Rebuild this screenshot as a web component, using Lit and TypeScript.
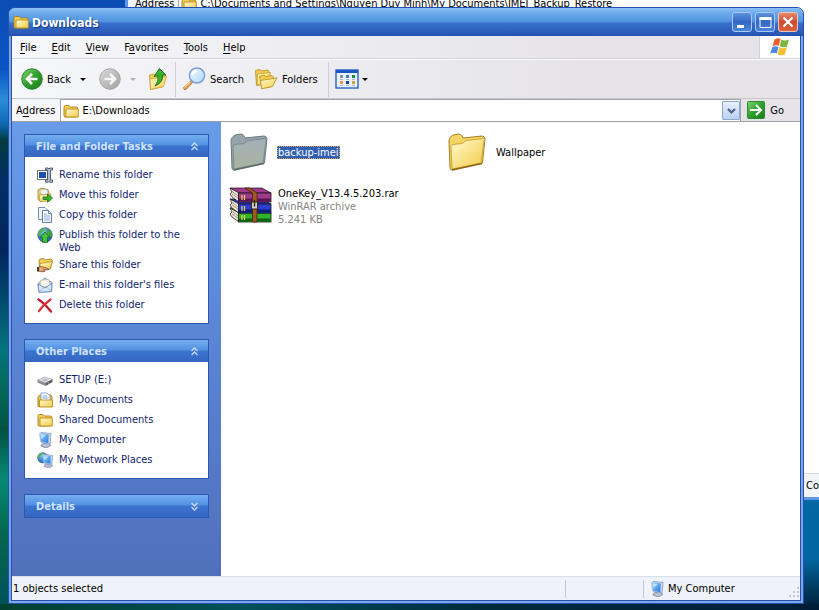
import { LitElement, html, css, svg, nothing, TemplateResult } from "lit";
import { customElement, property, state } from "lit/decorators.js";

/* ---------- icons ---------- */

const gradients = svg`
  <defs>
    <linearGradient id="fold" x1="0" y1="0" x2="1" y2="1">
      <stop offset="0" stop-color="#fffbd2" /><stop offset="1" stop-color="#f2cb45" />
    </linearGradient>
    <linearGradient id="grn" x1="0" y1="0" x2="1" y2="1">
      <stop offset="0" stop-color="#7fd873" /><stop offset="0.5" stop-color="#2f9f2b" /><stop offset="1" stop-color="#1d7d1b" />
    </linearGradient>
    <linearGradient id="gry" x1="0" y1="0" x2="1" y2="1">
      <stop offset="0" stop-color="#dcdcdc" /><stop offset="1" stop-color="#9f9f9f" />
    </linearGradient>
    <linearGradient id="scr" x1="0" y1="0" x2="1" y2="1">
      <stop offset="0" stop-color="#9fdcff" /><stop offset="1" stop-color="#1f74d8" />
    </linearGradient>
    <linearGradient id="gryfold" x1="0" y1="0" x2="0" y2="1">
      <stop offset="0" stop-color="#a3b0ba" /><stop offset="1" stop-color="#a9b39c" />
    </linearGradient>
    <radialGradient id="globe" cx="0.4" cy="0.3" r="0.8">
      <stop offset="0" stop-color="#7fc4f5" /><stop offset="1" stop-color="#164f9e" />
    </radialGradient>
    <linearGradient id="lens" x1="0" y1="0" x2="1" y2="1">
      <stop offset="0" stop-color="#f4fcff" /><stop offset="1" stop-color="#a5d8f7" />
    </linearGradient>
  </defs>
`;

const icon = (w: number, h: number, body: unknown) =>
  html`<svg class="icon" width=${w} height=${h} viewBox="0 0 ${w} ${h}" aria-hidden="true">${gradients}${body}</svg>`;

const computerBody = svg`
  <path d="M5 12 L11 11 L14 13.500 L9 16 L4 14Z" fill="#b9c0d2" stroke="#6d7894" stroke-width="0.7" />
  <path d="M4 0.500 L14 1.500 L13 12 L4.500 10.500Z" fill="#d5deee" stroke="#7387ad" stroke-width="0.7" />
  <path d="M2.500 1 L12 2.200 L11.500 11.500 L3.500 9.800Z" fill="url(#scr)" stroke="#a9c6ea" stroke-width="0.6" />
  <path d="M4 2.500 L9 3 L4.500 7Z" fill="#d9f2ff" opacity="0.7" />
`;

const globeBody = svg`
  <circle cx="8" cy="8" r="7.300" fill="url(#globe)" stroke="#27558c" stroke-width="0.6" />
  <path d="M2 4.500 Q5 0.500 8 1 L7 4 L4 6 L3 9 L1 8Z" fill="#54b948" />
  <path d="M10 2 Q14.500 4 15 8 L13 11 L11 8 L9.500 5Z" fill="#3fa836" />
`;

const smallFolder = svg`
  <path d="M1 4 Q1 2.500 2.500 2.500 L6 2.500 L7.500 4 L13.500 4 Q14.500 4 14.500 5 L14.500 13 L13 14 L2 14 Q1 14 1 13Z" fill="#f2cf56" stroke="#a97f14" stroke-width="0.9" />
  <path d="M3 6 L15.300 6 L15.300 14 L3 14Z" fill="url(#fold)" stroke="#b98d1c" stroke-width="0.9" />
`;

const book = (cover: string, shade: string, y: number) => svg`
  <g transform="translate(0 ${y})">
    <path d="M4 0 L36 0 L45 5 L12 5Z" fill=${cover} stroke="#1c1420" stroke-width="0.7" />
    <path d="M4 0 L13 5 V14 L6 9 L4 6 L6 4Z" fill="#f4ecd9" stroke="#221a20" stroke-width="0.8" />
    <path d="M6 3.500 L12.500 8 M6 6 L12.500 10.500" stroke="#8d8374" stroke-width="0.9" />
    <rect x="12.500" y="5" width="32.500" height="9" fill=${cover} stroke="#1a1218" stroke-width="0.8" />
    <rect x="13" y="10.500" width="31.500" height="3" fill=${shade} />
    <path d="M16 7 V12 M18.500 7 V12" stroke="#f1d05b" stroke-width="1.200" />
  </g>`;

const icons: Record<string, () => TemplateResult> = {
  folder: () => icon(16, 16, smallFolder),
  rename: () => icon(16, 16, svg`
    <rect x="0.500" y="3.500" width="10" height="9" fill="#fff" stroke="#6b7485" />
    <rect x="2" y="5" width="7" height="6" fill="#1c4fae" />
    <path d="M8.500 1 H11 L12 2 L13 1 H15.500 V3 H13.500 V13 H15.500 V15.300 H13 L12 14.500 L11 15.300 H8.500 V13 H10.500 V3 H8.500Z" fill="#b4bdcc" stroke="#465166" stroke-width="0.9" />
  `),
  move: () => icon(16, 16, svg`
    <path d="M1 3 L4 1 L11 2.500 L12 6 L12 13 L3 14.500 L1 12Z" fill="#f0d36a" stroke="#a2843a" stroke-width="0.8" />
    <path d="M3 3 L10 2.500 L11 7 L4 8Z" fill="#f4f7fb" stroke="#9fa9b8" stroke-width="0.6" />
    <path d="M2 8 L14 7 L13 14 L3 14.500Z" fill="url(#fold)" stroke="#b08b2b" stroke-width="0.7" />
    <path d="M6 10 H10.500 V7 L15.500 11 L10.500 15.300 V12.500 H6Z" fill="#37b52e" stroke="#17701a" stroke-width="0.8" />
  `),
  copy: () => icon(16, 16, svg`
    <path d="M1.500 0.500 H8 L11 3.500 V12.500 H1.500Z" fill="#eef5ff" stroke="#6d83a8" stroke-width="0.9" />
    <path d="M5.500 3.500 H11.500 L14.500 6.500 V15.500 H5.500Z" fill="#f8fbff" stroke="#54709c" stroke-width="0.9" />
    <path d="M11.500 3.500 V6.500 H14.500" fill="#c5d8f2" stroke="#54709c" stroke-width="0.8" />
    <path d="M7 7 H10 M7 9 H13 M7 11 H13 M7 13 H13" stroke="#7fa3d6" stroke-width="0.9" />
  `),
  publish: () => icon(16, 16, svg`${globeBody}
    <path d="M8 5 L13 10.500 H10.500 V15.300 H5.500 V10.500 H3Z" fill="#45c13a" stroke="#14661a" stroke-width="0.8" />
  `),
  share: () => icon(16, 16, svg`
    <path d="M2 4 L3 2 L7 1.500 L8.500 3 L14 2 L15.300 3.500 L13.500 11.500 L3 13Z" fill="#f3cf55" stroke="#9c7718" stroke-width="0.8" />
    <path d="M3 6.500 L15.500 4.500 L13 12 L3 13Z" fill="url(#fold)" stroke="#ab841f" stroke-width="0.7" />
    <path d="M0.500 10.500 L4 9.500 L9 10.800 L12 12.300 L10 13 L6.500 12.800 L8 14.500 L4 14.800 L0.500 13.500Z" fill="#e2a878" stroke="#6c3f1d" stroke-width="0.7" />
    <path d="M0 10 H2 V14.500 H0Z" fill="#4a3a2c" />
  `),
  mail: () => icon(16, 16, svg`
    <path d="M1 6.500 L8 0.800 L15 5.500 L14.500 14.500 L2 15.300Z" fill="#bcd3f0" stroke="#6d8bb8" stroke-width="0.8" />
    <path d="M3.500 3.500 L12 2.500 L13 9 L4 10Z" fill="#fffdf0" stroke="#c9b37c" stroke-width="0.6" />
    <path d="M1 7 L8 11 L15 6 L14.500 14.500 L2 15.300Z" fill="#d9e8fa" stroke="#5f80b2" stroke-width="0.8" />
    <path d="M2 15 L7 10.500 M14.500 14.500 L9.500 10" stroke="#8ba8d0" stroke-width="0.7" />
  `),
  del: () => icon(16, 16, svg`
    <path d="M1.500 2.500 Q6 5 14 14.500" fill="none" stroke="#c4202c" stroke-width="2.400" stroke-linecap="round" />
    <path d="M13.500 2.500 Q7 7 2 14" fill="none" stroke="#d8343c" stroke-width="2.200" stroke-linecap="round" />
  `),
  drive: () => icon(16, 16, svg`
    <path d="M0.500 8 L8 5 L15.500 7.500 L8.500 11Z" fill="#e4e6e8" stroke="#8b8f94" stroke-width="0.6" />
    <path d="M0.500 8 L8.500 11 V14 L0.500 10.500Z" fill="#8b8f94" />
    <path d="M8.500 11 L15.500 7.500 V10 L8.500 14Z" fill="#55595e" />
    <ellipse cx="8" cy="8" rx="3" ry="1.200" fill="#b8bcc0" />
    <circle cx="11.500" cy="11" r="0.800" fill="#9aa59a" />
  `),
  docs: () => icon(16, 16, svg`
    <path d="M1 4.500 L3 3 L14 3 L15 5 V14.500 H1Z" fill="#edc64b" stroke="#a97f14" stroke-width="0.9" />
    <path d="M4 1 H10 L13 4 V11 H4Z" fill="#fff" stroke="#6f93c9" stroke-width="0.8" />
    <path d="M5.500 4 H10 M5.500 6 H11.500" stroke="#5b9ae0" stroke-width="0.9" />
    <path d="M2.500 8 H15.500 V15 H2.500Z" fill="url(#fold)" stroke="#b98d1c" stroke-width="0.9" />
  `),
  computer: () => icon(16, 16, computerBody),
  network: () => icon(16, 16, svg`
    <g transform="scale(0.72)">${globeBody}</g>
    <g transform="translate(3.500 2) scale(0.88)">${computerBody}</g>
  `),
  back: () => icon(22, 22, svg`
    <circle cx="11" cy="11" r="10.300" fill="url(#grn)" stroke="#1f7a1f" stroke-width="0.9" />
    <path d="M16.500 11 H6.500 M11 6 L6 11 L11 16" fill="none" stroke="#fff" stroke-width="2.600" />
  `),
  forward: () => icon(22, 22, svg`
    <circle cx="11" cy="11" r="10.300" fill="url(#gry)" stroke="#a4a4a4" stroke-width="0.9" />
    <path d="M5.500 11 H15.500 M11 6 L16 11 L11 16" fill="none" stroke="#f6f6f6" stroke-width="2.600" />
  `),
  up: () => icon(22, 24, svg`
    <path d="M2.500 8 L7 7 L8.500 8.500 L17 6.500 L19 9 L15 20 L3.500 22.500Z" fill="#f1cd54" stroke="#c69b2a" stroke-width="0.8" />
    <path d="M3 12 L19.500 9.500 L16.500 19.500 L3.500 22.500Z" fill="url(#fold)" stroke="#cda133" stroke-width="0.8" />
    <path d="M12.500 1.500 L19 8 L15.500 8 Q16.500 15.500 8 19 Q12 14.500 11 8.800 L7 9.500Z" fill="#35b32c" stroke="#176b18" stroke-width="0.9" />
  `),
  search: () => icon(24, 24, svg`
    <path d="M9.500 13.500 L11 15 L4 22.500 Q1.500 23.500 1.500 20.500Z" fill="#e7a04f" stroke="#a5682a" stroke-width="0.8" />
    <path d="M8 15 L2.500 20.500" stroke="#fbd59b" stroke-width="1.200" />
    <circle cx="15" cy="8.500" r="7.600" fill="url(#lens)" stroke="#7f9fdb" stroke-width="1.500" />
    <path d="M10.500 8 Q11 4.500 15 4" fill="none" stroke="#fff" stroke-width="2" />
  `),
  folders: () => icon(24, 22, svg`
    <path d="M1.500 2.500 L6 1.500 L7.500 3 L14 2 L15 4 L15 15 L2.500 17.500Z" fill="#f2cd54" stroke="#c1932a" stroke-width="0.9" />
    <path d="M3.500 6 L16.500 4.500 L14 15.500 L3 17Z" fill="url(#fold)" stroke="#c69b2a" stroke-width="0.8" />
    <path d="M5.500 8.500 L10 7 L11.500 8.500 L18 7.500 L19.500 9.500 L17.500 18.500 L8 20.500Z" fill="#f2cd54" stroke="#b98d1c" stroke-width="0.8" />
    <path d="M6.500 12.500 L23 9.800 L18.500 18.500 L7.500 20.800Z" fill="url(#fold)" stroke="#c1932a" stroke-width="0.9" />
  `),
  views: () => icon(24, 20, svg`
    <rect x="1" y="1" width="22" height="18" fill="#e9f3ff" stroke="#1c57b8" stroke-width="1.300" />
    <rect x="1" y="1" width="22" height="3" fill="#1c57c4" />
    <rect x="5" y="6" width="3" height="3" fill="#8b8f9a" /><rect x="11" y="6" width="3" height="3" fill="#3b7fc9" /><rect x="17" y="6" width="3" height="3" fill="#1c8a36" />
    <path d="M5 10.500 h3 M11 10.500 h3 M17 10.500 h3" stroke="#a9b3c6" />
    <rect x="5" y="12" width="3" height="3" fill="#e79a3c" /><rect x="11" y="12" width="3" height="3" fill="#1b3f99" /><rect x="17" y="12" width="3" height="3" fill="#c9a52c" />
    <path d="M5 16.500 h3 M11 16.500 h3 M17 16.500 h3" stroke="#a9b3c6" />
  `),
  go: () => icon(18, 18, svg`
    <rect x="0.500" y="0.500" width="17" height="17" rx="1" fill="url(#grn)" stroke="#2c8a2c" />
    <path d="M3 9 H13.500 M9 4 L14 9 L9 14" fill="none" stroke="#fff" stroke-width="2" />
  `),
  flag: () => icon(22, 20, svg`
    <path d="M5.500 2.500 Q9 0.300 11.500 2 L9.800 8.800 Q7 7.300 3.500 9.200Z" fill="#e9602c" />
    <path d="M12.300 2.500 Q15.500 4.500 20 2.500 L18 9.500 Q14.500 11 10.800 9.200Z" fill="#7db83a" />
    <path d="M3.200 10.200 Q6.500 8.300 9.500 10 L7.800 16.500 Q5 15 1.200 16.700Z" fill="#4a8ae0" />
    <path d="M10.400 10.300 Q14 12.200 17.800 10.500 L15.800 17.500 Q12 19.300 8.600 17.200Z" fill="#f5be2e" />
  `),
  bigFolder: () => icon(48, 48, svg`
    <path d="M5 13 Q5 10 7 8.500 L9 7 L15 6 Q17 6 18 8 L19 10 L38 8 Q40.500 8 41 10.500 L38.500 35 L8 42 Q6 42 6 40Z" fill="#f3d465" stroke="#a9801f" />
    <path d="M7 18.500 Q7 17 9 16.500 L18 15.500 L22 12.500 L39.500 10.500 Q40.500 11 40 13 L37 35 L8 41Z" fill="url(#fold)" stroke="#d0a53a" />
    <path d="M8 42 L38 35.500" stroke="#8a661a" stroke-width="1.500" />
  `),
  greyFolder: () => icon(48, 48, svg`
    <path d="M5 13 Q5 10 7 8.500 L9 7 L15 6 Q17 6 18 8 L19 10 L38 8 Q40.500 8 41 10.500 L38.500 35 L8 42 Q6 42 6 40Z" fill="#95a3ad" stroke="#6b7a80" />
    <path d="M7 18.500 Q7 17 9 16.500 L18 15.500 L22 12.500 L39.500 10.500 Q40.500 11 40 13 L37 35 L8 41Z" fill="url(#gryfold)" stroke="#7d8b8e" />
    <path d="M8 42 L38 35.500" stroke="#5f6b66" stroke-width="1.500" />
  `),
  rar: () => icon(48, 48, svg`
    ${book("#2db52a", "#0c6412", 26)}
    ${book("#2a3fd0", "#101a78", 17)}
    ${book("#a03a8c", "#5a1550", 6)}
    <path d="M19 6 L23.500 6 L31 11 V40 H26.500 V11Z" fill="#9a5a22" stroke="#4a270b" stroke-width="0.8" />
    <rect x="25.500" y="20" width="6" height="7" fill="#d9d3c4" stroke="#2d2620" />
    <path d="M28.500 18 V24.500" stroke="#3a2c14" stroke-width="1.500" />
  `),
  chevUp: () => icon(9, 9, svg`<path d="M1.500 4 L4.500 1 L7.500 4 M1.500 8 L4.500 5 L7.500 8" fill="none" stroke="#c9dcff" stroke-width="1.300" />`),
  chevDown: () => icon(9, 9, svg`<path d="M1.500 1 L4.500 4 L7.500 1 M1.500 5 L4.500 8 L7.500 5" fill="none" stroke="#c9dcff" stroke-width="1.300" />`),
  dropArrow: () => icon(9, 8, svg`<path d="M1 2 L4.500 5.500 L8 2" fill="none" stroke="#4d6185" stroke-width="2.200" />`),
  minimize: () => icon(18, 18, svg`<rect x="4" y="12" width="7" height="3" fill="#fff" />`),
  maximize: () => icon(18, 18, svg`<path d="M4 5 H15 V14.500 H4Z" fill="none" stroke="#fff" /><rect x="3.500" y="4" width="12" height="3" fill="#fff" />`),
  close: () => icon(18, 18, svg`<path d="M4.500 4.500 L13.500 13.500 M13.500 4.500 L4.500 13.500" stroke="#fff" stroke-width="2.200" />`),
  grip: () => icon(12, 12, svg`<g fill="#c3c5d3">
    <rect x="9" y="1" width="2" height="2" /><rect x="5" y="5" width="2" height="2" /><rect x="9" y="5" width="2" height="2" />
    <rect x="1" y="9" width="2" height="2" /><rect x="5" y="9" width="2" height="2" /><rect x="9" y="9" width="2" height="2" /></g>`),
};

const resets = css`
  * { box-sizing: border-box; }
  button, input {
    font: inherit; color: inherit; background: none; border: 0; margin: 0; padding: 0; border-radius: 0;
  }
  a { color: inherit; text-decoration: none; }
  .icon { display: block; flex: none; }
`;

/* ---------- task pane group ---------- */

interface Link { icon: string; label: string; }

@customElement("task-group")
export class TaskGroup extends LitElement {
  @property() heading = "";
  @property({ type: Boolean }) open = false;
  @property({ attribute: false }) links: Link[] = [];

  static styles = [resets, css`
    :host { display: block; border: 1px solid #2a56b4; }
    h2 { margin: 0; font: inherit; }
    .head {
      display: flex; align-items: center; justify-content: space-between;
      width: 100%; height: 22px; padding: 0 9px 0 11px;
      font-weight: bold; color: #cfe3ff; text-align: left;
      background: linear-gradient(#74aef0 0, #5391e2 45%, #3c74cf 50%, #3566c2 100%);
    }
    .list {
      display: flex; flex-direction: column; gap: 3px;
      margin: 0; padding: 10px 20px 9px 12px; list-style: none; background: #fff;
    }
    .link { display: flex; gap: 6px; min-height: 17px; color: #10246e; line-height: 13px; }
    .text { padding-top: 1px; }
  `];

  private toggle() { this.open = !this.open; }

  render() {
    return html`
      <h2>
        <button class="head" aria-expanded=${this.open} @click=${this.toggle}>
          ${this.heading}${this.open ? icons.chevUp() : icons.chevDown()}
        </button>
      </h2>
      ${this.open ? html`
        <ul class="list">
          ${this.links.map((l) => html`
            <li><a class="link" href="#">${icons[l.icon]()}<span class="text">${l.label}</span></a></li>`)}
        </ul>` : nothing}
    `;
  }
}

/* ---------- page ---------- */

@customElement("app-root")
export class AppRoot extends LitElement {
  @state() private selected = "backup-imei";

  private menus = ["File", "Edit", "View", "Favorites", "Tools", "Help"];

  private keys: Record<string, number> = { Favorites: 1 };

  private tasks: Link[] = [
    { icon: "rename", label: "Rename this folder" },
    { icon: "move", label: "Move this folder" },
    { icon: "copy", label: "Copy this folder" },
    { icon: "publish", label: "Publish this folder to the Web" },
    { icon: "share", label: "Share this folder" },
    { icon: "mail", label: "E-mail this folder's files" },
    { icon: "del", label: "Delete this folder" },
  ];

  private places: Link[] = [
    { icon: "drive", label: "SETUP (E:)" },
    { icon: "docs", label: "My Documents" },
    { icon: "folder", label: "Shared Documents" },
    { icon: "computer", label: "My Computer" },
    { icon: "network", label: "My Network Places" },
  ];

  private files = [
    { name: "backup-imei", icon: "bigFolder", details: [] as string[] },
    { name: "Wallpaper", icon: "bigFolder", details: [] as string[] },
    { name: "OneKey_V13.4.5.203.rar", icon: "rar", details: ["WinRAR archive", "5.241 KB"] },
  ];

  static styles = [resets, css`
    :host {
      display: flex; position: relative; overflow: hidden; box-sizing: border-box;
      min-height: 100vh; padding: 7px 15px 6px 8px;
      font: 11px/13px "DejaVu Sans Condensed", "DejaVu Sans", sans-serif; color: #000;
      background:
        linear-gradient(90deg, #03402f 0, #02505a 30%, #012a3c 60%, #001d38 100%) bottom / 100% 6px no-repeat,
        linear-gradient(#0068a2 0 500px, #02659f 560px, #00395c 590px, #001d38) right / 20px 100% no-repeat,
        linear-gradient(#0b4db4 0, #0a55c4 70px, #2b8edb 100px, #0b66b0 125px, #033b3e 140px, #022f66 180px,
          #01265c 250px, #014a6e 300px, #04757c 350px, #046b5e 380px, #03523f 430px, #068a76 480px, #03694f 530px, #02505a 100%);
    }

    .behind {
      position: absolute; top: -10px; left: 125px; right: -110px; height: 510px;
      display: flex; flex-direction: column; justify-content: space-between;
      border: 3px solid #5f96e8; border-top: 0; background: #fff;
    }
    .behind-address {
      display: flex; align-items: center; height: 26px; padding: 6px 0 4px 7px; gap: 4px;
      background: #f3f4f8; border-bottom: 1px solid #8c8c8c;
    }
    .behind-field {
      display: flex; align-items: center; gap: 3px; flex: 1; height: 24px;
      padding-left: 2px; border-left: 1px solid #a5acb2; background: #fff;
    }
    .behind-status {
      display: flex; justify-content: flex-end; align-items: center;
      height: 24px; background: #f1f4f9; border-top: 1px solid #d6dae0;
    }
    .behind-cell { width: 120px; }

    .window {
      position: relative; display: flex; flex-direction: column; flex: 1; min-width: 0;
      border: 1px solid #2150ae; border-radius: 7px 7px 0 0; overflow: hidden;
      background: #7ca6ec; padding: 0 2px 2px;
    }
    .titlebar {
      display: flex; align-items: center; gap: 3px; height: 28px; margin: 0 -2px; padding: 0 5px 0 4px;
      background: linear-gradient(#8cc0f4 0, #68a8ea 20%, #5294e0 48%, #3870cc 54%, #2b5ab8 90%, #2450ac 100%);
    }
    .title {
      flex: 1; margin: 0; padding: 3px 0 0 0; font-size: 12px; font-weight: bold; color: #fff;
      text-shadow: 1px 1px 1px #123a86;
    }
    .caption {
      width: 20px; height: 20px; border: 1px solid #a9c8f4; border-radius: 3px;
      background: linear-gradient(#5b93e0, #3467c4 50%, #4a86dd);
    }
    .caption.x { border-color: #f0c3b8; background: linear-gradient(#e58a70, #cf4a2c 50%, #dd6241); }

    .frame {
      display: flex; flex-direction: column; flex: 1;
      border: 1px solid #2450ac; border-top: 0;
      background: #fff;
    }
    .bars { background: linear-gradient(90deg, #f6f7fa, #e5e3e8 75%); }

    .menubar { display: flex; height: 23px; border-bottom: 1px solid #d3d2d6; }
    .menus { display: flex; flex: 1; align-items: center; gap: 15px; padding-left: 8px; }
    .key { text-decoration: underline; text-underline-offset: 2px; }
    .flag {
      display: flex; align-items: center; justify-content: center;
      width: 41px; background: #fff; border-left: 1px solid #d3d2d6;
    }

    .toolbar {
      display: flex; align-items: center; height: 40px; padding-left: 9px;
      border-top: 1px solid #fbfbfc; border-bottom: 1px solid #c8c7cb;
    }
    .tool { display: flex; align-items: center; gap: 4px; }
    .grey { color: #b0b0b0; }
    .arrow { width: 24px; height: 20px; display: flex; align-items: center; justify-content: center; }
    .arrow.slim { width: 12px; }
    .tri { border: 3px solid transparent; border-top-color: currentColor; border-bottom: 0; }
    .sep { width: 1px; height: 35px; margin: 0 6px; background: #cfced2; }
    .sep.far { margin-left: 10px; }
    .tool.forward { margin-left: 4px; }
    .tool.up { margin-left: 2px; }
    .tool.next { margin-left: 10px; }

    .addressbar { display: flex; align-items: center; height: 23px; border-bottom: 1px solid #a0a0a4; }
    .address-label { padding: 0 5px 0 4px; }
    .combo {
      display: flex; align-items: center; flex: 1; height: 22px; padding: 0 0 0 2px; gap: 3px;
      border: 1px solid #a2a3a8; border-bottom: 0; background: #fff;
    }
    .combo-input { flex: 1; min-width: 0; outline: 0; }
    .drop {
      display: flex; align-items: center; justify-content: center; width: 18px; height: 19px;
      border: 1px solid #8fa6cd; border-radius: 1px; background: linear-gradient(#e8f1fd, #b9d0f3);
    }
    .go { display: flex; align-items: center; gap: 5px; padding: 0 16px 0 6px; }

    .body { display: flex; flex: 1; }
    .pane {
      display: flex; flex-direction: column; gap: 15px; width: 209px; flex: none;
      padding: 12px 12px 20px; background: linear-gradient(#689ce8, #5b86d6 45%, #5170bc);
    }
    .files {
      display: grid; grid-template-columns: repeat(auto-fill, 212px); grid-auto-rows: 48px;
      gap: 6px; align-content: start; flex: 1; min-width: 0; margin: 0; padding: 6px 5px; list-style: none;
    }
    .file { display: flex; align-items: center; gap: 3px; text-align: left; height: 48px; }
    .name { padding: 0 1px; }
    .name.on { background: #2f5fb3; color: #fff; outline: 1px dotted #d8a04a; outline-offset: -1px; }
    .meta { display: block; padding: 0 1px; color: #858585; }
    .lines { display: block; }

    .status {
      display: flex; align-items: center; height: 24px; background: #eff2f8; border-top: 1px solid #d7dee4;
    }
    .count { flex: 1; padding-left: 1px; }
    .cell { width: 78px; height: 18px; border-left: 1px solid #c3c8d4; }
    .zone {
      display: flex; align-items: center; gap: 3px; width: 157px; height: 18px; padding-left: 5px;
      border-left: 1px solid #c3c8d4;
    }
    .grip { margin-left: auto; align-self: flex-end; }
  `];

  private menu(label: string) {
    const k = this.keys[label] ?? 0;
    return html`<button role="menuitem">${label.slice(0, k)}<span class="key">${label[k]}</span>${label.slice(k + 1)}</button>`;
  }

  render() {
    return html`
      <div class="behind">
        <div class="behind-address">
          <span>Address</span>
          <span class="behind-field">${icons.folder()}<span>C:\\Documents and Settings\\Nguyen Duy Minh\\My Documents\\IMEI_Backup_Restore</span></span>
        </div>
        <div class="behind-status"><span class="behind-cell">Co</span></div>
      </div>

      <main class="window">
        <header class="titlebar">
          ${icons.folder()}
          <h1 class="title">Downloads</h1>
          <button class="caption" aria-label="Minimize">${icons.minimize()}</button>
          <button class="caption" aria-label="Maximize">${icons.maximize()}</button>
          <button class="caption x" aria-label="Close">${icons.close()}</button>
        </header>

        <div class="frame">
          <div class="bars">
            <div class="menubar">
              <nav class="menus" role="menubar">${this.menus.map((m) => this.menu(m))}</nav>
              <div class="flag">${icons.flag()}</div>
            </div>

            <div class="toolbar">
              <button class="tool">${icons.back()}Back</button>
              <button class="arrow" aria-label="Back history"><span class="tri"></span></button>
              <button class="tool forward" aria-label="Forward">${icons.forward()}</button>
              <button class="arrow grey" aria-label="Forward history"><span class="tri"></span></button>
              <button class="tool up" aria-label="Up">${icons.up()}</button>
              <span class="sep"></span>
              <button class="tool">${icons.search()}Search</button>
              <button class="tool next">${icons.folders()}Folders</button>
              <span class="sep far"></span>
              <button class="tool" aria-label="Views">${icons.views()}</button>
              <button class="arrow slim" aria-label="Views menu"><span class="tri"></span></button>
            </div>

            <div class="addressbar">
              <label class="address-label" for="address">A<span class="key">d</span>dress</label>
              <div class="combo">
                ${icons.folder()}
                <input id="address" class="combo-input" value="E:\\Downloads" />
                <button class="drop" aria-label="Show addresses">${icons.dropArrow()}</button>
              </div>
              <button class="go">${icons.go()}Go</button>
            </div>
          </div>

          <div class="body">
            <aside class="pane">
              <task-group heading="File and Folder Tasks" open .links=${this.tasks}></task-group>
              <task-group heading="Other Places" open .links=${this.places}></task-group>
              <task-group heading="Details"></task-group>
            </aside>
            <ul class="files">
              ${this.files.map((f) => {
                const on = f.name === this.selected;
                return html`
                  <li>
                    <button class="file" aria-pressed=${on} @click=${() => (this.selected = f.name)}>
                      ${on && f.icon === "bigFolder" ? icons.greyFolder() : icons[f.icon]()}
                      <span class="lines">
                        <span class="name ${on ? "on" : ""}">${f.name}</span>
                        ${f.details.map((d) => html`<span class="meta">${d}</span>`)}
                      </span>
                    </button>
                  </li>`;
              })}
            </ul>
          </div>

          <footer class="status">
            <span class="count">1 objects selected</span>
            <span class="cell"></span>
            <span class="zone">${icons.computer()}My Computer<span class="grip">${icons.grip()}</span></span>
          </footer>
        </div>
      </main>
    `;
  }
}
